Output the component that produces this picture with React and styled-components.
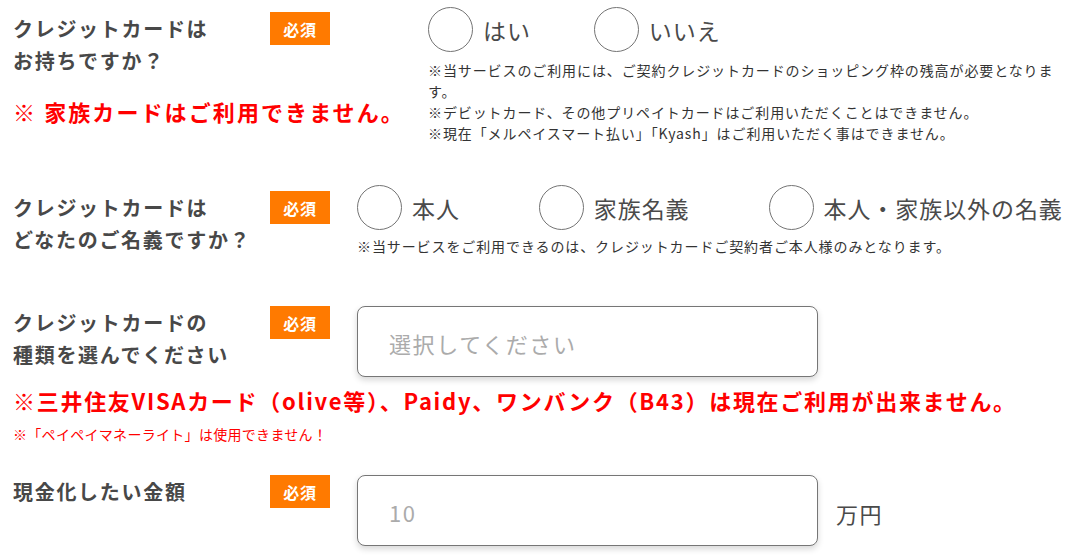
import React from 'react';
import styled, { createGlobalStyle } from 'styled-components';

const Global = createGlobalStyle`
  html, body { margin: 0; padding: 0; background: #fff; }
  body {
    font-family: "Noto Sans CJK JP", "Noto Sans", sans-serif;
    color: #333;
    letter-spacing: 0.1em;
  }
  * { box-sizing: border-box; }
`;

const Page = styled.div`
  width: 1074px;
  height: 558px;
  overflow: hidden;
  padding: 7px 0 0 13px;
`;

const Row = styled.section`
  display: flex;
  align-items: flex-start;
  margin-top: ${(p) => p.$mt || 0}px;
`;

const LeftCol = styled.div`
  width: ${(p) => p.$w}px;
  flex-shrink: 0;
`;

const Head = styled.div`
  display: flex;
  align-items: flex-start;
  flex-shrink: 0;
  padding-top: ${(p) => p.$pt || 0}px;
`;

const Label = styled.div`
  width: 257px;
  margin-top: 1px;
  font-size: 20px;
  font-weight: 700;
  line-height: 32px;
  letter-spacing: 0.085em;
  color: #484848;
`;

const Badge = styled.span`
  width: 60px;
  height: 33px;
  flex-shrink: 0;
  display: flex;
  align-items: center;
  justify-content: center;
  background: #ff7a00;
  color: #fff;
  font-size: 16px;
  font-weight: 700;
  letter-spacing: 0.05em;
  line-height: 1;
`;

const Content = styled.div`
  margin-left: ${(p) => p.$ml || 0}px;
  width: ${(p) => p.$w}px;
`;

const RadioGroup = styled.div`
  display: flex;
  align-items: center;
  gap: ${(p) => p.$gap}px;
`;

const Radio = styled.label`
  display: flex;
  align-items: center;
  cursor: pointer;
`;

const Circle = styled.span`
  width: 45px;
  height: 45px;
  border-radius: 50%;
  border: 1.5px solid #747474;
  background: #fff;
  flex-shrink: 0;
`;

const RadioText = styled.span`
  margin-left: 10px;
  font-size: 23px;
  letter-spacing: 0.04em;
  line-height: 1;
  color: #4a4a4a;
  padding-top: 2px;
`;

const Notes = styled.div`
  margin-top: ${(p) => p.$mt || 0}px;
  font-size: 14px;
  line-height: 21px;
  letter-spacing: 0.9px;
  color: #333;
`;

const Alert = styled.p`
  margin: ${(p) => p.$mt || 0}px 0 0;
  font-size: 22px;
  font-weight: 700;
  line-height: 30px;
  letter-spacing: ${(p) => p.$ls || 0.095}em;
  color: #ff0000;
  white-space: nowrap;
`;

const SmallAlert = styled.p`
  margin: ${(p) => p.$mt || 0}px 0 0;
  font-size: 14px;
  line-height: 20px;
  letter-spacing: 0.3px;
  color: #ff0000;
`;

const FieldRow = styled.div`
  display: flex;
  align-items: center;
`;

const Box = styled.div`
  width: 461px;
  height: 71px;
  border: 1.5px solid #767676;
  border-radius: 8px;
  background: #fff;
  box-shadow: 0 3px 6px rgba(0, 0, 0, 0.16);
  display: flex;
  align-items: center;
  padding: 2px 0 0 31px;
  font-size: 22px;
  color: #ababab;
`;

const Unit = styled.span`
  margin-left: 18px;
  padding-top: 5px;
  font-size: 22px;
  color: #4a4a4a;
`;

const RadioOption = ({ children }) => (
  <Radio>
    <Circle />
    <RadioText>{children}</RadioText>
  </Radio>
);

export default function App() {
  return (
    <>
      <Global />
      <Page>
        <Row>
          <LeftCol $w={415}>
            <Head $pt={5}>
              <Label>
                クレジットカードは
                <br />
                お持ちですか？
              </Label>
              <Badge>必須</Badge>
            </Head>
            <Alert $mt={19}>※ 家族カードはご利用できません。</Alert>
          </LeftCol>
          <Content $w={632}>
            <RadioGroup $gap={63}>
              <RadioOption>はい</RadioOption>
              <RadioOption>いいえ</RadioOption>
            </RadioGroup>
            <Notes $mt={8}>
              ※当サービスのご利用には、ご契約クレジットカードのショッピング枠の残高が必要となります。
              <br />
              ※デビットカード、その他プリペイトカードはご利用いただくことはできません。
              <br />
              ※現在「メルペイスマート払い」「Kyash」はご利用いただく事はできません。
            </Notes>
          </Content>
        </Row>

        <Row $mt={41}>
          <Head $pt={6}>
            <Label>
              クレジットカードは
              <br />
              どなたのご名義ですか？
            </Label>
            <Badge>必須</Badge>
          </Head>
          <Content $ml={27}>
            <RadioGroup $gap={79}>
              <RadioOption>本人</RadioOption>
              <RadioOption>家族名義</RadioOption>
              <RadioOption>本人・家族以外の名義</RadioOption>
            </RadioGroup>
            <Notes $mt={6}>
              ※当サービスをご利用できるのは、クレジットカードご契約者ご本人様のみとなります。
            </Notes>
          </Content>
        </Row>

        <Row $mt={49}>
          <Head>
            <Label>
              クレジットカードの
              <br />
              種類を選んでください
            </Label>
            <Badge>必須</Badge>
          </Head>
          <Content $ml={27}>
            <Box role="combobox">選択してください</Box>
          </Content>
        </Row>
        <Alert $mt={8} $ls={0.078}>
          ※三井住友VISAカード（olive等）、Paidy、ワンバンク（B43）は現在ご利用が出来ません。
        </Alert>
        <SmallAlert $mt={9}>※「ペイペイマネーライト」は使用できません！</SmallAlert>

        <Row $mt={31}>
          <Head>
            <Label>現金化したい金額</Label>
            <Badge>必須</Badge>
          </Head>
          <Content $ml={27}>
            <FieldRow>
              <Box>10</Box>
              <Unit>万円</Unit>
            </FieldRow>
          </Content>
        </Row>
      </Page>
    </>
  );
}
